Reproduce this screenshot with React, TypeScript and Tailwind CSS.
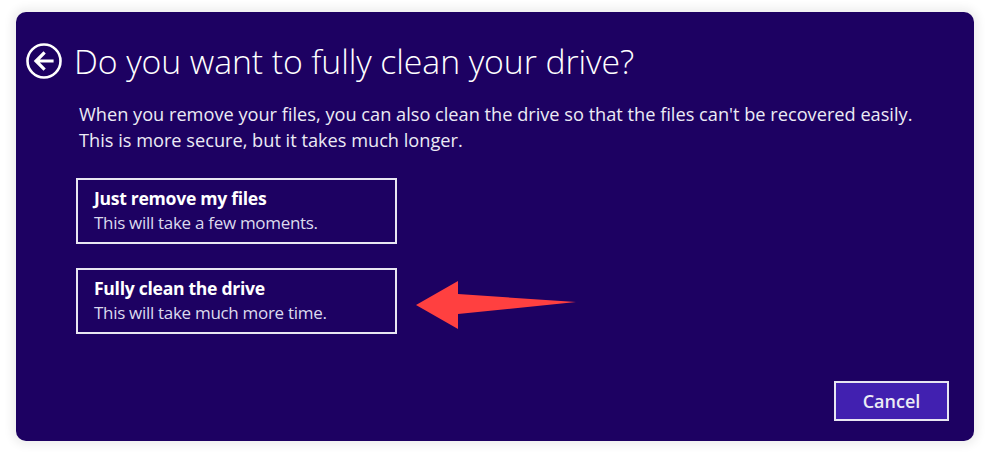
export default function App() {
  const font = { fontFamily: '"Open Sans", "Noto Sans", sans-serif' }
  return (
    <div className="w-[991px] h-[462px] bg-white p-[12px_17px_21px_16px]" style={font}>
      <div className="relative h-full rounded-[10px] bg-[#1d0162] shadow-[0_0_10px_4px_rgba(0,0,0,0.07)] text-white">
        <div className="flex items-center pt-[29px] pl-[9px]">
          <svg width="38" height="38" viewBox="0 0 38 38" fill="none" stroke="white">
            <circle cx="19" cy="19" r="16.5" strokeWidth="2.6" />
            <path d="M27 19H11.5M18.5 11.5L11 19l7.5 7.5" strokeWidth="3.2" strokeLinecap="square" />
          </svg>
          <h1 className="ml-[11px] text-[33.8px] font-light leading-[40px] tracking-[-0.1px]">Do you want to fully clean your drive?</h1>
        </div>
        <p className="mt-[20px] pl-[63px] text-[18.2px] leading-[26px] text-[#ecebf5]">
          When you remove your files, you can also clean the drive so that the files can't be recovered easily.
          <br />
          This is more secure, but it takes much longer.
        </p>
        <div className="mt-[25px] ml-[60px] flex flex-col gap-[24px]">
          <button className="w-[321px] h-[66px] border-2 border-[#e8e6f2] text-left pl-[16px] pt-[6px] flex flex-col">
            <span className="text-[17.6px] font-bold leading-[25px] tracking-[-0.3px]">Just remove my files</span>
            <span className="text-[17px] leading-[24px] text-[#dcdaee] tracking-[-0.3px]">This will take a few moments.</span>
          </button>
          <div className="flex items-center">
            <button className="w-[321px] h-[66px] border-2 border-[#e8e6f2] text-left pl-[16px] pt-[6px] flex flex-col">
              <span className="text-[17.6px] font-bold leading-[25px] tracking-[-0.3px]">Fully clean the drive</span>
              <span className="text-[17px] leading-[24px] text-[#dcdaee] tracking-[-0.3px]">This will take much more time.</span>
            </button>
            <svg className="ml-[19px] mt-[10px]" width="162" height="50" viewBox="0 0 162 50">
              <path d="M0 24 L42 0 L42 13 L160 21 L42 33 L42 48 Z" fill="#ff4040" />
            </svg>
          </div>
        </div>
        <button className="absolute right-[25px] bottom-[20px] w-[115px] h-[40px] border-2 border-[#e8e6f2] bg-[#4120b0] text-[18px] font-semibold text-[#ecebf5] leading-none">
          Cancel
        </button>
      </div>
    </div>
  )
}
